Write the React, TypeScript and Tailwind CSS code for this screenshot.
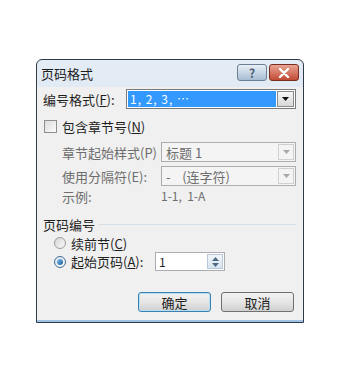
export default function App() {
  const font = { fontFamily: '"Noto Sans CJK SC", "Noto Sans", sans-serif' };
  return (
    <div className="w-[343px] h-[377px] bg-white pt-[59px] pl-[36px]" style={font}>
      <div className="w-[268px] h-[264px] flex flex-col border border-[#2f3b48] rounded-t-[6px] bg-gradient-to-b from-[#e4ecf5] to-[#cddbea] overflow-hidden">
        {/* Title bar */}
        <div className="h-[27px] shrink-0 flex items-center pl-[4px] pr-[4px]">
          <span className="text-[13px] text-[#1e1e1e] leading-none">页码格式</span>
          <div className="ml-auto flex gap-[2px] mt-[-2px]">
            <div className="w-[30px] h-[17px] rounded-[3px] border border-[#6d7f95] bg-gradient-to-b from-[#e9eff6] to-[#a9bdd3] flex items-center justify-center text-[12px] font-bold text-[#4c5e73] leading-none">
              ?
            </div>
            <div className="w-[30px] h-[17px] rounded-[3px] border border-[#7a2e22] bg-gradient-to-b from-[#e9a493] to-[#c14a33] flex items-center justify-center">
              <svg width="12" height="10" viewBox="0 0 12 10">
                <path d="M2 1 L10 9 M10 1 L2 9" stroke="white" strokeWidth="2.4" strokeLinecap="round" />
              </svg>
            </div>
          </div>
        </div>

        {/* Body */}
        <div className="flex-1 bg-[#f0f0f0] border-b-[2px] border-b-[#9fc4e3] pl-[6px] pr-[7px] text-[13px] text-[#1e1e1e]">
          {/* 编号格式 */}
          <div className="flex items-center h-[20px] mt-[2px]">
            <span className="w-[83px] leading-none">编号格式(<u>F</u>):</span>
            <div className="flex-1 h-[20px] border border-[#7a7a7a] bg-white flex items-center p-[1px]">
              <div className="flex-1 h-full bg-[#3399ff] text-white text-[12px] leading-none flex items-center pl-[2px] tracking-[1px]">
                1,&nbsp;2,&nbsp;3,&nbsp;…
              </div>
              <div className="w-[17px] h-full ml-[1px] border border-[#8a8a8a] bg-gradient-to-b from-[#f6f6f6] to-[#d8d8d8] flex items-center justify-center">
                <svg width="7" height="4" viewBox="0 0 7 4">
                  <path d="M0 0 L7 0 L3.5 4 Z" fill="#111" />
                </svg>
              </div>
            </div>
          </div>

          {/* 包含章节号 */}
          <div className="flex items-center h-[14px] mt-[10px] pl-[1px]">
            <div className="w-[13px] h-[13px] border border-[#8e8f8f] bg-gradient-to-br from-[#dcdcdc] to-[#fbfbfb]" />
            <span className="ml-[5px] leading-none">包含章节号(<u>N</u>)</span>
          </div>

          {/* 章节起始样式 */}
          <div className="flex items-center h-[20px] mt-[9px] pl-[19px] text-[#6d6d6d]">
            <span className="w-[99px] leading-none">章节起始样式(P)</span>
            <div className="flex-1 h-[20px] border border-[#adadad] bg-[#f4f4f4] flex items-center">
              <span className="flex-1 pl-[4px] leading-none">标题 1</span>
              <div className="w-[16px] h-[16px] mr-[1px] border border-[#d0d0d0] bg-[#f4f4f4] flex items-center justify-center">
                <svg width="7" height="4" viewBox="0 0 7 4">
                  <path d="M0 0 L7 0 L3.5 4 Z" fill="#a8a8a8" />
                </svg>
              </div>
            </div>
          </div>

          {/* 使用分隔符 */}
          <div className="flex items-center h-[20px] mt-[4px] pl-[19px] text-[#6d6d6d]">
            <span className="w-[99px] leading-none">使用分隔符(E):</span>
            <div className="flex-1 h-[20px] border border-[#adadad] bg-[#f4f4f4] flex items-center">
              <span className="flex-1 pl-[4px] leading-none whitespace-pre">-    (连字符)</span>
              <div className="w-[16px] h-[16px] mr-[1px] border border-[#d0d0d0] bg-[#f4f4f4] flex items-center justify-center">
                <svg width="7" height="4" viewBox="0 0 7 4">
                  <path d="M0 0 L7 0 L3.5 4 Z" fill="#a8a8a8" />
                </svg>
              </div>
            </div>
          </div>

          {/* 示例 */}
          <div className="flex items-center h-[16px] mt-[2px] pl-[19px] text-[#6d6d6d]">
            <span className="w-[99px] leading-none">示例:</span>
            <span className="leading-none text-[12px]">1-1,&nbsp;&nbsp;1-A</span>
          </div>

          {/* 页码编号 */}
          <div className="flex items-center h-[16px] mt-[12px]">
            <span className="leading-none">页码编号</span>
            <div className="flex-1 h-px bg-[#d5dfe5] ml-[4px]" />
          </div>

          <div className="flex items-center h-[14px] mt-[4px] pl-[11px]">
            <div className="w-[12px] h-[12px] rounded-full border border-[#9a9a9a] bg-gradient-to-br from-[#d6d6d6] to-[#fafafa]" />
            <span className="ml-[5px] leading-none">续前节(<u>C</u>)</span>
          </div>

          <div className="flex items-center h-[19px] mt-[2px] pl-[11px]">
            <div className="w-[12px] h-[12px] rounded-full border border-[#3d6b94] bg-gradient-to-br from-[#e0e8f0] to-[#fafafa] flex items-center justify-center">
              <div className="w-[6px] h-[6px] rounded-full bg-gradient-to-br from-[#7ec4f0] to-[#1a5a9a]" />
            </div>
            <span className="ml-[5px] w-[84px] leading-none">起始页码(<u>A</u>):</span>
            <div className="w-[70px] h-[19px] border border-[#abadb3] bg-white flex items-center">
              <span className="flex-1 pl-[3px] text-[12px] leading-none">1</span>
              <div className="w-[16px] h-[15px] mr-[1px] border border-[#b7c8d9] bg-gradient-to-b from-[#f2f6fa] to-[#d9e4ee] flex flex-col items-center justify-center gap-[2px]">
                <svg width="7" height="4" viewBox="0 0 7 4">
                  <path d="M0 4 L7 4 L3.5 0 Z" fill="#4d6a86" />
                </svg>
                <svg width="7" height="4" viewBox="0 0 7 4">
                  <path d="M0 0 L7 0 L3.5 4 Z" fill="#4d6a86" />
                </svg>
              </div>
            </div>
          </div>

          {/* Buttons */}
          <div className="flex justify-end gap-[10px] mt-[21px] pr-[2px]">
            <button className="w-[73px] h-[20px] rounded-[3px] border border-[#3c7fb1] bg-gradient-to-b from-[#f2f2f2] via-[#e6e6e6] to-[#cfcfcf] text-[13px] leading-none text-[#1e1e1e] shadow-[inset_0_0_0_1px_#b8e0f5]">
              确定
            </button>
            <button className="w-[73px] h-[20px] rounded-[3px] border border-[#707070] bg-gradient-to-b from-[#f2f2f2] via-[#e6e6e6] to-[#cfcfcf] text-[13px] leading-none text-[#1e1e1e]">
              取消
            </button>
          </div>
        </div>
      </div>
    </div>
  );
}
